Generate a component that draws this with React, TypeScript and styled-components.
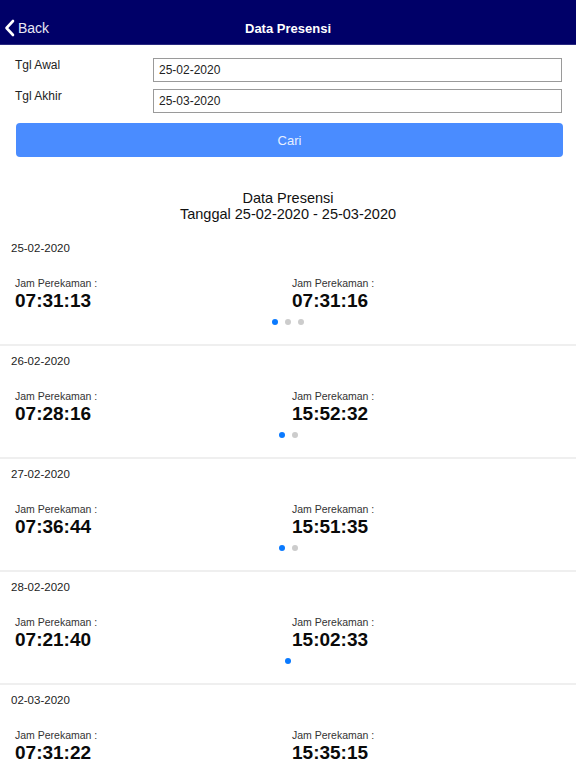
import React from 'react';
import styled, { createGlobalStyle } from 'styled-components';

const GlobalStyle = createGlobalStyle`
    html, body {
        margin: 0;
        padding: 0;
        background: #ffffff;
        font-family: "Liberation Sans", Roboto, Arial, sans-serif;
        color: #111;
    }
    * {
        box-sizing: border-box;
    }
`;

const Page = styled.div`
    width: 576px;
    height: 768px;
    overflow: hidden;
    background: #fff;
`;

const NavBar = styled.div`
    height: 45px;
    padding-top: 12px;
    background: #000068;
    border-bottom: 1px solid #2a2a80;
    display: grid;
    grid-template-columns: 1fr auto 1fr;
    align-items: center;
    color: #fff;
`;

const BackButton = styled.div`
    display: flex;
    align-items: center;
    gap: 3px;
    padding-left: 4px;
    font-size: 14px;
    color: #e8e8f4;
`;

const NavTitle = styled.div`
    font-size: 13px;
    font-weight: bold;
`;

const Form = styled.div`
    padding: 13px 14px 0 15px;
    display: flex;
    flex-direction: column;
    gap: 7px;
`;

const FieldRow = styled.div`
    display: grid;
    grid-template-columns: 138px 1fr;
    align-items: start;
`;

const FieldLabel = styled.div`
    font-size: 12px;
    line-height: 14px;
    color: #222;
`;

const DateInput = styled.div`
    height: 24px;
    border: 1px solid #9a9a9a;
    padding: 0 5px;
    display: flex;
    align-items: center;
    font-size: 12px;
    color: #222;
`;

const SearchButton = styled.div`
    margin: 10px 13px 0 16px;
    height: 34px;
    border-radius: 4px;
    background: #4a8cff;
    color: #e6efff;
    font-size: 13px;
    display: flex;
    align-items: center;
    justify-content: center;
`;

const Heading = styled.div`
    margin-top: 33px;
    text-align: center;
    font-size: 14.5px;
    line-height: 16px;
    color: #111;
`;

const List = styled.div`
    margin-top: 11px;
`;

const Section = styled.div`
    height: 113px;
    padding: 8px 0 0 0;
    border-bottom: 2px solid #efefef;
`;

const DateLabel = styled.div`
    padding-left: 11px;
    font-size: 11.5px;
    line-height: 14px;
    color: #222;
`;

const Times = styled.div`
    margin-top: 21px;
    padding-left: 15px;
    display: grid;
    grid-template-columns: 277px 1fr;
`;

const Record = styled.div`
    display: flex;
    flex-direction: column;
`;

const RecordLabel = styled.div`
    font-size: 10.5px;
    line-height: 14px;
    color: #333;
`;

const RecordTime = styled.div`
    font-size: 19px;
    line-height: 22px;
    font-weight: bold;
    color: #0a0a0a;
`;

const Dots = styled.div`
    margin-top: 7px;
    display: flex;
    justify-content: center;
    gap: 7px;
`;

const Dot = styled.span<{ $active?: boolean }>`
    width: 6px;
    height: 6px;
    border-radius: 50%;
    background: ${(p) => (p.$active ? '#0a7aff' : '#cccccc')};
`;

const records = [
    { date: '25-02-2020', times: ['07:31:13', '07:31:16'], pages: 3 },
    { date: '26-02-2020', times: ['07:28:16', '15:52:32'], pages: 2 },
    { date: '27-02-2020', times: ['07:36:44', '15:51:35'], pages: 2 },
    { date: '28-02-2020', times: ['07:21:40', '15:02:33'], pages: 1 },
    { date: '02-03-2020', times: ['07:31:22', '15:35:15'], pages: 2 },
];

export default function App() {
    return (
        <Page>
            <GlobalStyle />
            <NavBar>
                <BackButton>
                    <svg width="11" height="18" viewBox="0 0 11 18">
                        <path d="M9 2 L2.5 9 L9 16" fill="none" stroke="#fff" strokeWidth="2.6" strokeLinecap="round" strokeLinejoin="round" />
                    </svg>
                    Back
                </BackButton>
                <NavTitle>Data Presensi</NavTitle>
                <div />
            </NavBar>
            <Form>
                <FieldRow>
                    <FieldLabel>Tgl Awal</FieldLabel>
                    <DateInput>25-02-2020</DateInput>
                </FieldRow>
                <FieldRow>
                    <FieldLabel>Tgl Akhir</FieldLabel>
                    <DateInput>25-03-2020</DateInput>
                </FieldRow>
            </Form>
            <SearchButton>Cari</SearchButton>
            <Heading>
                Data Presensi
                <br />
                Tanggal 25-02-2020 - 25-03-2020
            </Heading>
            <List>
                {records.map((r) => (
                    <Section key={r.date}>
                        <DateLabel>{r.date}</DateLabel>
                        <Times>
                            {r.times.map((t) => (
                                <Record key={t}>
                                    <RecordLabel>Jam Perekaman :</RecordLabel>
                                    <RecordTime>{t}</RecordTime>
                                </Record>
                            ))}
                        </Times>
                        <Dots>
                            {Array.from({ length: r.pages }).map((_, i) => (
                                <Dot key={i} $active={i === 0} />
                            ))}
                        </Dots>
                    </Section>
                ))}
            </List>
        </Page>
    );
}
